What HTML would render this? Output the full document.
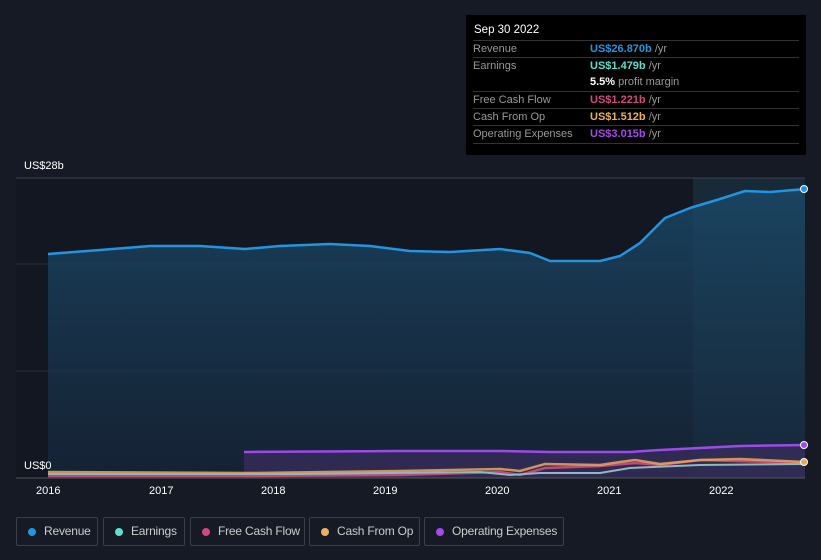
<!DOCTYPE html>
<html><head><style>
body{margin:0;background:#151a25;width:821px;height:560px;overflow:hidden;font-family:"Liberation Sans",sans-serif;position:relative}
.tip{position:absolute;left:466px;top:15px;width:340px;height:140px;background:#000;color:#fff;font-size:11px}
.tip .h{position:absolute;left:8px;top:9px;font-size:11.5px}
.row{position:absolute;left:7px;width:326px;height:17px;border-top:1px solid #333;color:#999;line-height:17px}
.row span{position:absolute;left:117px}
.lg{position:absolute;top:517px;height:29px;border:1px solid #3a3f4a;border-radius:2px;color:#ccc;font-size:12px;line-height:27px;box-sizing:border-box;padding-left:27px;white-space:nowrap;letter-spacing:-0.2px}
.lg i{position:absolute;left:11px;top:10px;width:8px;height:8px;border-radius:50%}
.ax{position:absolute;top:485px;color:#fff;font-size:11px}
</style></head><body>
<svg width="821" height="560" style="position:absolute;left:0;top:0">
<defs><linearGradient id="g" x1="0" y1="0" x2="0" y2="1"><stop offset="0" stop-color="#1b4a6a" stop-opacity=".8"/><stop offset="1" stop-color="#16263a" stop-opacity=".7"/></linearGradient></defs>
<rect x="16" y="178" width="789" height="300" fill="#121722"/>
<rect x="693" y="178" width="112" height="300" fill="#182a38"/>
<line x1="16" y1="178" x2="805" y2="178" stroke="#3a4050"/>
<line x1="16" y1="264" x2="805" y2="264" stroke="#2a303d"/>
<line x1="16" y1="371" x2="805" y2="371" stroke="#2a303d"/>
<path d="M48,254 L100,250 L150,246 L200,246 L245,249 L280,246 L330,244 L370,246 L410,251 L450,252 L500,249 L530,253 L550,261 L600,261 L620,256 L640,243 L665,218 L690,208 L720,199 L745,191 L770,192 L805,189 L805,478 L48,478Z" fill="url(#g)"/>
<path d="M48,254 L100,250 L150,246 L200,246 L245,249 L280,246 L330,244 L370,246 L410,251 L450,252 L500,249 L530,253 L550,261 L600,261 L620,256 L640,243 L665,218 L690,208 L720,199 L745,191 L770,192 L805,189" fill="none" stroke="#2394df" stroke-width="2.5" stroke-linejoin="round"/>
<path d="M244,452 L400,451 L500,451 L550,452 L630,452 L660,450 L700,448 L740,446 L805,445 L805,478 L244,478Z" fill="#3a2d60" opacity=".7"/>
<path d="M244,452 L400,451 L500,451 L550,452 L630,452 L660,450 L700,448 L740,446 L805,445" fill="none" stroke="#9d4ae8" stroke-width="2.5"/>
<path d="M48,476 L250,476 L400,475 L500,472 L520,475 L545,468 L600,466 L635,463 L660,465 L700,460 L805,463" fill="none" stroke="#c0487a" stroke-width="2.5"/>
<path d="M48,472 L250,473 L400,471 L500,469 L520,471 L545,464 L600,465 L620,462 L635,460 L660,464 L700,460 L740,459 L805,462" fill="none" stroke="#e8a85a" stroke-width="2.5" opacity=".85"/>
<path d="M48,474 L300,474 L480,472 L510,475 L540,473 L600,473 L630,468 L700,465 L805,464" fill="none" stroke="#8fb8c0" stroke-width="2"/>
<line x1="16" y1="478" x2="805" y2="478" stroke="#555"/>
<circle cx="804" cy="189" r="3.5" fill="#2394df" stroke="#fff"/>
<circle cx="804" cy="445" r="3.5" fill="#9d4ae8" stroke="#fff"/>
<circle cx="804" cy="462" r="3.5" fill="#e8a85a" stroke="#fff"/>
</svg>
<div style="position:absolute;left:24px;top:160px;color:#fff;font-size:11px">US$28b</div>
<div style="position:absolute;left:24px;top:460px;color:#fff;font-size:11px">US$0</div>
<div class="ax" style="left:36px">2016</div><div class="ax" style="left:149px">2017</div><div class="ax" style="left:261px">2018</div><div class="ax" style="left:373px">2019</div><div class="ax" style="left:485px">2020</div><div class="ax" style="left:597px">2021</div><div class="ax" style="left:709px">2022</div>
<div class="tip"><div class="h">Sep 30 2022</div>
<div class="row" style="top:25px">Revenue<span><b style="color:#2394df">US$26.870b</b> /yr</span></div>
<div class="row" style="top:42px">Earnings<span><b style="color:#5ee0cc">US$1.479b</b> /yr</span></div>
<div class="row" style="top:59px;border:none"><span><b style="color:#fff">5.5%</b> profit margin</span></div>
<div class="row" style="top:76px">Free Cash Flow<span><b style="color:#d0487e">US$1.221b</b> /yr</span></div>
<div class="row" style="top:93px">Cash From Op<span><b style="color:#eab060">US$1.512b</b> /yr</span></div>
<div class="row" style="top:110px;border-bottom:1px solid #333">Operating Expenses<span><b style="color:#a44ae8">US$3.015b</b> /yr</span></div>
</div>
<div class="lg" style="left:16px;width:82px"><i style="background:#2394df"></i>Revenue</div>
<div class="lg" style="left:103px;width:82px"><i style="background:#5ee0cc"></i>Earnings</div>
<div class="lg" style="left:190px;width:115px"><i style="background:#d0487e"></i>Free Cash Flow</div>
<div class="lg" style="left:309px;width:111px"><i style="background:#eab060"></i>Cash From Op</div>
<div class="lg" style="left:424px;width:140px"><i style="background:#a44ae8"></i>Operating Expenses</div>
</body></html>
